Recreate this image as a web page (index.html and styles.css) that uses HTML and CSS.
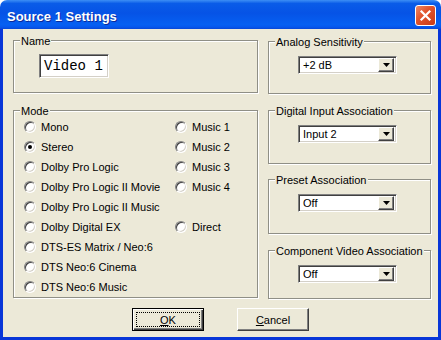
FILE: index.html
```html
<!DOCTYPE html>
<html>
<head>
  <title>Source 1 Settings</title>
  <link rel="stylesheet" href="styles.css">
</head>
<body>
  <div class="window">
    <div class="titlebar">
      <span class="title">Source 1 Settings</span>
      <div class="close-btn">
        <svg width="13" height="13" viewBox="0 0 13 13">
          <path d="M2.5 2.5 L10.5 10.5 M10.5 2.5 L2.5 10.5" stroke="#fff" stroke-width="2.2" stroke-linecap="square"/>
        </svg>
      </div>
    </div>

    <div class="client">
      <div class="panels">
        <div class="col col-left">
          <div class="group group-name">
            <span class="group-label">Name</span>
            <div class="textbox">Video 1</div>
          </div>

          <div class="group group-mode">
            <span class="group-label">Mode</span>
            <div class="mode-cols">
              <div class="mode-col mode-col-1">
                <div class="radio-row"><span class="radio"></span>Mono</div>
                <div class="radio-row"><span class="radio checked"></span>Stereo</div>
                <div class="radio-row"><span class="radio"></span>Dolby Pro Logic</div>
                <div class="radio-row"><span class="radio"></span>Dolby Pro Logic II Movie</div>
                <div class="radio-row"><span class="radio"></span>Dolby Pro Logic II Music</div>
                <div class="radio-row"><span class="radio"></span>Dolby Digital EX</div>
                <div class="radio-row"><span class="radio"></span>DTS-ES Matrix / Neo:6</div>
                <div class="radio-row"><span class="radio"></span>DTS Neo:6 Cinema</div>
                <div class="radio-row"><span class="radio"></span>DTS Neo:6 Music</div>
              </div>
              <div class="mode-col mode-col-2">
                <div class="radio-row"><span class="radio"></span>Music 1</div>
                <div class="radio-row"><span class="radio"></span>Music 2</div>
                <div class="radio-row"><span class="radio"></span>Music 3</div>
                <div class="radio-row"><span class="radio"></span>Music 4</div>
                <div class="radio-row"></div>
                <div class="radio-row"><span class="radio"></span>Direct</div>
              </div>
            </div>
          </div>
        </div>

        <div class="col col-right">
          <div class="group group-analog">
            <span class="group-label">Analog Sensitivity</span>
            <div class="combo"><span class="combo-value">+2 dB</span><span class="combo-btn"><svg width="7" height="4"><polygon points="0,0 7,0 3.5,4" fill="#000"/></svg></span></div>
          </div>
          <div class="group group-digital">
            <span class="group-label">Digital Input Association</span>
            <div class="combo"><span class="combo-value">Input 2</span><span class="combo-btn"><svg width="7" height="4"><polygon points="0,0 7,0 3.5,4" fill="#000"/></svg></span></div>
          </div>
          <div class="group group-preset">
            <span class="group-label">Preset Association</span>
            <div class="combo"><span class="combo-value">Off</span><span class="combo-btn"><svg width="7" height="4"><polygon points="0,0 7,0 3.5,4" fill="#000"/></svg></span></div>
          </div>
          <div class="group group-component">
            <span class="group-label">Component Video Association</span>
            <div class="combo"><span class="combo-value">Off</span><span class="combo-btn"><svg width="7" height="4"><polygon points="0,0 7,0 3.5,4" fill="#000"/></svg></span></div>
          </div>
        </div>
      </div>

      <div class="buttons">
        <div class="btn btn-default"><span class="focus"><u>O</u>K</span></div>
        <div class="btn"><u>C</u>ancel</div>
      </div>
    </div>
  </div>
</body>
</html>
```

FILE: styles.css
```css
body {
  margin: 0;
  font-family: "Liberation Sans", Arial, sans-serif;
  font-size: 11px;
  color: #000;
  background: #fff;
}
.window {
  width: 441px;
  height: 340px;
  display: flex;
  flex-direction: column;
}
.titlebar {
  height: 29px;
  flex: none;
  box-sizing: border-box;
  padding: 0 5px 0 7px;
  display: flex;
  justify-content: space-between;
  align-items: flex-start;
  border-radius: 7px 7px 0 0;
  background: linear-gradient(to bottom, #3d8ff5 0%, #0a5ce8 12%, #0653e6 45%, #0660f2 85%, #0658ee 93%, #0847d6 100%);
}
.title {
  margin-top: 9px;
  font-size: 13px;
  line-height: 15px;
  font-weight: bold;
  color: #fff;
  text-shadow: 1px 1px #0c2a9a;
}
.close-btn {
  margin-top: 5px;
  width: 21px;
  height: 21px;
  box-sizing: border-box;
  border: 1px solid #fff;
  border-radius: 3px;
  background: linear-gradient(135deg, #ec8a68 0%, #e2552e 40%, #c93a16 100%);
  display: flex;
  align-items: center;
  justify-content: center;
}
.client {
  flex: 1;
  background: #ece9d8;
  border: solid #0836d8;
  border-width: 0 3px 3px 3px;
  padding: 11px 7px 0 10px;
  display: flex;
  flex-direction: column;
}
.panels {
  display: flex;
  gap: 10px;
}
.col {
  display: flex;
  flex-direction: column;
}
.col-left {
  width: 245px;
  gap: 17px;
}
.col-right {
  width: 163px;
  margin-top: 1px;
}
.group {
  position: relative;
  box-sizing: border-box;
  border: 1px solid #8f8f86;
  box-shadow: inset 1px 1px #fff, 1px 1px #fff;
}
.group-label {
  position: absolute;
  top: -6px;
  left: 6px;
  padding: 0 1px;
  line-height: 13px;
  background: #ece9d8;
}
.group-name {
  height: 53px;
  padding: 13px 0 0 25px;
}
.textbox {
  width: 70px;
  height: 24px;
  box-sizing: border-box;
  border: 1px solid;
  border-color: #808080 #fff #fff #808080;
  box-shadow: inset 1px 1px #404040, inset -1px -1px #d4d0c8;
  background: #fff;
  padding-left: 4px;
  font-family: "Liberation Mono", "Courier New", monospace;
  font-size: 14px;
  line-height: 22px;
}
.group-mode {
  height: 188px;
  padding: 6px 0 0 10px;
}
.mode-cols {
  display: flex;
}
.mode-col-1 {
  width: 151px;
}
.radio-row {
  height: 20px;
  display: flex;
  align-items: center;
  gap: 5px;
  white-space: nowrap;
}
.radio {
  width: 12px;
  height: 12px;
  flex: none;
  box-sizing: border-box;
  border-radius: 50%;
  border: 1px solid;
  border-color: #808080 #fff #fff #808080;
  box-shadow: inset 1px 1px #404040, inset -1px -1px #d4d0c8;
  background: #fff;
  display: flex;
  align-items: center;
  justify-content: center;
}
.radio.checked::after {
  content: "";
  width: 4px;
  height: 4px;
  border-radius: 50%;
  background: #000;
}
.group-analog,
.group-digital,
.group-preset,
.group-component {
  padding: 14px 0 0 29px;
}
.group-analog {
  height: 53px;
}
.group-digital {
  height: 54px;
  margin-top: 16px;
}
.group-preset {
  height: 55px;
  margin-top: 15px;
}
.group-component {
  height: 49px;
  margin-top: 16px;
}
.combo {
  width: 99px;
  height: 18px;
  box-sizing: border-box;
  border: 1px solid;
  border-color: #808080 #fff #fff #808080;
  box-shadow: inset 1px 1px #404040, inset -1px -1px #d4d0c8;
  background: #fff;
  padding: 2px;
  display: flex;
  align-items: center;
}
.combo-value {
  flex: 1;
  padding-left: 2px;
}
.combo-btn {
  width: 16px;
  height: 14px;
  box-sizing: border-box;
  background: #ece9d8;
  border: 1px solid;
  border-color: #fff #404040 #404040 #fff;
  box-shadow: inset -1px -1px #808080;
  display: flex;
  align-items: center;
  justify-content: center;
}
.buttons {
  margin-top: auto;
  margin-bottom: 6px;
  padding-left: 119px;
  display: flex;
  gap: 33px;
}
.btn {
  width: 72px;
  height: 23px;
  box-sizing: border-box;
  background: #ece9d8;
  border: 1px solid;
  border-color: #fff #404040 #404040 #fff;
  box-shadow: inset -1px -1px #808080;
  display: flex;
  align-items: center;
  justify-content: center;
}
.btn-default {
  border-color: #000;
  box-shadow: inset 1px 1px #fff, inset -1px -1px #404040, inset -2px -2px #808080;
  padding: 3px;
  align-items: stretch;
}
.focus {
  flex: 1;
  border: 1px dotted #000;
  display: flex;
  align-items: center;
  justify-content: center;
}
```
